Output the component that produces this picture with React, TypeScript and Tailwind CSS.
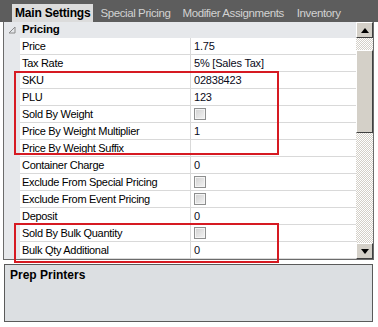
import React from "react";

type Row = { label: string; value?: string; check?: boolean };

const rows: Row[] = [
  { label: "Price", value: "1.75" },
  { label: "Tax Rate", value: "5% [Sales Tax]" },
  { label: "SKU", value: "02838423" },
  { label: "PLU", value: "123" },
  { label: "Sold By Weight", check: true },
  { label: "Price By Weight Multiplier", value: "1" },
  { label: "Price By Weight Suffix", value: "" },
  { label: "Container Charge", value: "0" },
  { label: "Exclude From Special Pricing", check: true },
  { label: "Exclude From Event Pricing", check: true },
  { label: "Deposit", value: "0" },
  { label: "Sold By Bulk Quantity", check: true },
  { label: "Bulk Qty Additional", value: "0" },
];

function Check() {
  return (
    <div className="w-[12px] h-[12px] border border-[#8e8f8f] bg-[#f4f4f4] p-[1px]">
      <div className="w-full h-full bg-gradient-to-br from-[#d4d4d4] to-[#f0f0f0]" />
    </div>
  );
}

export default function App() {
  return (
    <div
      className="relative w-[378px] h-[327px] bg-white overflow-hidden text-[11px] text-black"
      style={{ fontFamily: '"Liberation Sans", Arial, sans-serif' }}
    >
      {/* Tab bar */}
      <div className="h-[22px] bg-[#5d5d5d] flex items-end pl-[12px]">
        <div className="h-[18px] px-[3px] bg-[#dcdcdc] font-bold text-[12px] leading-[18px] tracking-[-0.2px] text-black">
          Main Settings
        </div>
        <div className="h-[18px] pl-[7px] pr-[6px] text-[11.5px] leading-[18px] tracking-[-0.4px] text-[#d2d2d2]">
          Special Pricing
        </div>
        <div className="h-[18px] px-[6px] text-[11.5px] leading-[18px] tracking-[-0.4px] text-[#d2d2d2]">
          Modifier Assignments
        </div>
        <div className="h-[18px] pl-[7px] pr-[6px] text-[11.5px] leading-[18px] tracking-[-0.4px] text-[#d2d2d2]">
          Inventory
        </div>
      </div>

      {/* Property grid */}
      <div className="ml-[3px] w-[371px] border-l border-r border-b border-[#6b6b6b] flex">
        <div className="flex-1 flex flex-col">
          {/* Category */}
          <div className="h-[16px] bg-[#e6e8eb] flex items-center">
            <div className="w-[16px] flex justify-center">
              <svg width="8" height="8" viewBox="0 0 8 8">
                <polygon points="7,1 7,7 1,7" fill="none" stroke="#8a8a8a" strokeWidth="1" />
              </svg>
            </div>
            <span className="font-bold text-[11.5px] pl-[2px] tracking-[-0.2px]">Pricing</span>
          </div>
          {rows.map((r) => (
            <div key={r.label} className="h-[17px] flex">
              <div className="w-[16px] bg-[#e6e8eb]" />
              <div className="flex-1 flex border-b border-[#d9d9d9] bg-white">
                <div className="w-[171px] pl-[2px] leading-[17px] tracking-[-0.3px] border-r border-[#d9d9d9] whitespace-nowrap">
                  {r.label}
                </div>
                <div className="flex-1 pl-[3px] flex items-center leading-[17px] tracking-[-0.2px] text-[#0a0a20]">
                  {r.check ? <Check /> : r.value}
                </div>
              </div>
            </div>
          ))}
        </div>
        {/* Scrollbar */}
        <div className="w-[17px] flex flex-col bg-[repeating-conic-gradient(#d4d0c8_0_25%,#ffffff_0_50%)] bg-[length:2px_2px]">
          <div className="h-[16px] bg-[#d4d0c8] border border-t-white border-l-white border-r-[#404040] border-b-[#404040] flex items-center justify-center">
            <svg width="8" height="5" viewBox="0 0 8 5">
              <polygon points="4,0 8,5 0,5" fill="#000" />
            </svg>
          </div>
          <div className="h-[12px]" />
          <div className="h-[83px] bg-[#d4d0c8] border border-t-white border-l-white border-r-[#404040] border-b-[#404040]" />
          <div className="flex-1" />
          <div className="h-[16px] bg-[#d4d0c8] border border-t-white border-l-white border-r-[#404040] border-b-[#404040] flex items-center justify-center">
            <svg width="8" height="5" viewBox="0 0 8 5">
              <polygon points="0,0 8,0 4,5" fill="#000" />
            </svg>
          </div>
        </div>
      </div>

      {/* Splitter gap */}
      <div className="h-[4px]" />

      {/* Prep printers panel */}
      <div className="ml-[4px] w-[369px] h-[58px] bg-[#dcdfe2] border border-[#5a5a5a] pl-[5px] pt-[1px]">
        <span className="font-bold text-[12px]">Prep Printers</span>
      </div>

      {/* Annotation boxes */}
      <div className="absolute left-[14px] top-[71px] w-[265px] h-[84px] border-2 border-[#d61a22]" />
      <div className="absolute left-[14px] top-[223px] w-[265px] h-[40px] border-2 border-[#d61a22]" />
    </div>
  );
}
